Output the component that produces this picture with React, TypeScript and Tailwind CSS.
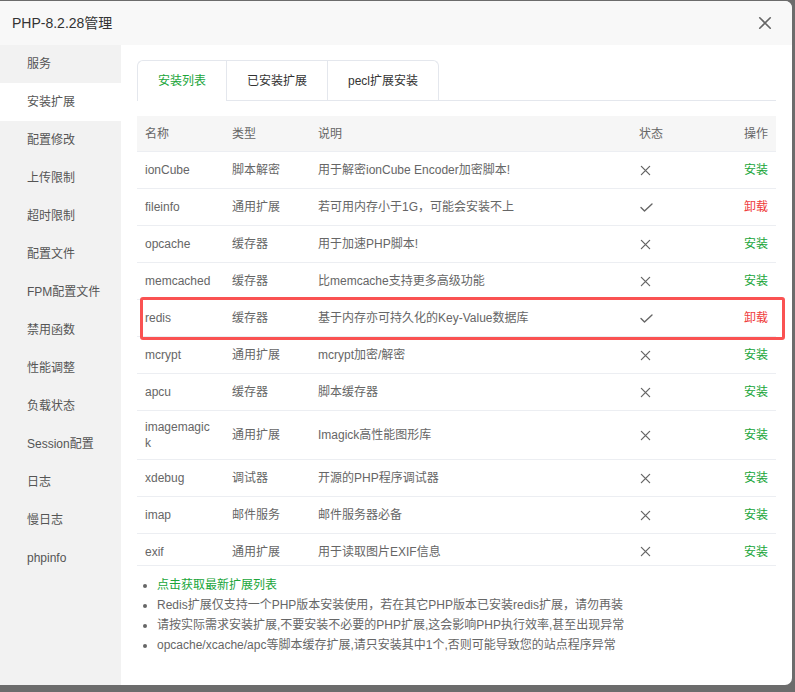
import type { ReactNode } from 'react';

type Ext = {
  name: ReactNode;
  type: string;
  desc: string;
  installed: boolean;
  tall?: boolean;
};

const menu = [
  '服务',
  '安装扩展',
  '配置修改',
  '上传限制',
  '超时限制',
  '配置文件',
  'FPM配置文件',
  '禁用函数',
  '性能调整',
  '负载状态',
  'Session配置',
  '日志',
  '慢日志',
  'phpinfo',
];

const exts: Ext[] = [
  { name: 'ionCube', type: '脚本解密', desc: '用于解密ionCube Encoder加密脚本!', installed: false },
  { name: 'fileinfo', type: '通用扩展', desc: '若可用内存小于1G，可能会安装不上', installed: true },
  { name: 'opcache', type: '缓存器', desc: '用于加速PHP脚本!', installed: false },
  { name: 'memcached', type: '缓存器', desc: '比memcache支持更多高级功能', installed: false },
  { name: 'redis', type: '缓存器', desc: '基于内存亦可持久化的Key-Value数据库', installed: true },
  { name: 'mcrypt', type: '通用扩展', desc: 'mcrypt加密/解密', installed: false },
  { name: 'apcu', type: '缓存器', desc: '脚本缓存器', installed: false },
  {
    name: (
      <>
        imagemagic
        <br />k
      </>
    ),
    type: '通用扩展',
    desc: 'Imagick高性能图形库',
    installed: false,
    tall: true,
  },
  { name: 'xdebug', type: '调试器', desc: '开源的PHP程序调试器', installed: false },
  { name: 'imap', type: '邮件服务', desc: '邮件服务器必备', installed: false },
  { name: 'exif', type: '通用扩展', desc: '用于读取图片EXIF信息', installed: false },
];

const notes = [
  'Redis扩展仅支持一个PHP版本安装使用，若在其它PHP版本已安装redis扩展，请勿再装',
  '请按实际需求安装扩展,不要安装不必要的PHP扩展,这会影响PHP执行效率,甚至出现异常',
  'opcache/xcache/apc等脚本缓存扩展,请只安装其中1个,否则可能导致您的站点程序异常',
];

function Cross({ size = 11 }: { size?: number }) {
  return (
    <svg width={size} height={size} viewBox="0 0 12 12" fill="none" stroke="#666" strokeWidth="1.4" strokeLinecap="round">
      <path d="M1.5 1.5l9 9M10.5 1.5l-9 9" />
    </svg>
  );
}

function Check() {
  return (
    <svg width="13" height="9" viewBox="0 0 13 9" fill="none" stroke="#666" strokeWidth="1.4" strokeLinecap="round" strokeLinejoin="round">
      <path d="M1 4.5l3.5 3.5L12 1" />
    </svg>
  );
}

const cols = 'grid grid-cols-[87px_86px_321px_85px_1fr] items-center';

export default function App() {
  return (
    <div
      className="h-[692px] w-[795px] overflow-hidden bg-[#6c6c6c] pt-[1px]"
      style={{ fontFamily: '"Liberation Sans", "Noto Sans CJK SC", sans-serif' }}
    >
      <div className="flex h-[684px] w-[792px] flex-col overflow-hidden rounded-r-[7px] bg-white">
        <div className="flex h-[44px] shrink-0 items-center justify-between bg-[#f8f8f8] pl-[12px] pr-[20px]">
          <span className="text-[14px] text-[#333]">PHP-8.2.28管理</span>
          <Cross size={14} />
        </div>
        <div className="relative flex flex-1">
          <div className="w-[121px] shrink-0 bg-[#f2f2f2]">
            {menu.map((m, i) => (
              <div
                key={m}
                className={`flex h-[38px] items-center pl-[27px] text-[12px] text-[#555] ${i === 1 ? 'bg-white' : ''}`}
              >
                {m}
              </div>
            ))}
          </div>
          <div className="flex-1 px-[16px] pt-[15px]">
            <div className="flex h-[41px] border-b border-[#e4e7ed]">
              <div className="-mb-px flex w-[89px] items-center justify-center rounded-tl-[6px] border-l border-t border-[#e4e7ed] bg-white text-[12px] text-[#20a53a]">
                安装列表
              </div>
              <div className="flex w-[101px] items-center justify-center border-l border-t border-[#e4e7ed] text-[12px] text-[#333]">
                已安装扩展
              </div>
              <div className="flex w-[112px] items-center justify-center rounded-tr-[6px] border-x border-t border-[#e4e7ed] text-[12px] text-[#333]">
                pecl扩展安装
              </div>
            </div>
            <div className="mt-[15px] text-[12px] text-[#666]">
              <div className={`${cols} h-[36px] bg-[#f6f6f6] border-b border-[#eceef2]`}>
                <span className="pl-[8px]">名称</span>
                <span className="pl-[8px]">类型</span>
                <span className="pl-[8px]">说明</span>
                <span className="pl-[8px]">状态</span>
                <span className="pr-[8px] text-right">操作</span>
              </div>
              {exts.map((e, i) => (
                <div
                  key={i}
                  className={`${cols} border-b border-[#eceef2] ${
                    e.tall ? 'h-[49px]' : i === exts.length - 1 ? 'h-[32px] pt-[4px]' : 'h-[37px]'
                  }`}
                >
                  <span className={`pl-[8px] ${e.tall ? 'leading-[16px]' : ''}`}>{e.name}</span>
                  <span className="pl-[8px]">{e.type}</span>
                  <span className="pl-[8px]">{e.desc}</span>
                  <span className="flex pl-[9px]">{e.installed ? <Check /> : <Cross />}</span>
                  <span className={`pr-[8px] text-right ${e.installed ? 'text-[#ef3b3b]' : 'text-[#20a53a]'}`}>
                    {e.installed ? '卸载' : '安装'}
                  </span>
                </div>
              ))}
            </div>
            <ul className="mt-[9px] pl-[20px] text-[12px] leading-[20px] text-[#666]">
              <li className="list-disc text-[#20a53a] marker:text-[#666]">点击获取最新扩展列表</li>
              {notes.map((n) => (
                <li key={n} className="list-disc marker:text-[#666]">
                  {n}
                </li>
              ))}
            </ul>
          </div>
          <div className="pointer-events-none absolute left-[140px] top-[252px] h-[43px] w-[645px] rounded-[3px] border-[3px] border-[#fa5252]" />
        </div>
      </div>
    </div>
  );
}
